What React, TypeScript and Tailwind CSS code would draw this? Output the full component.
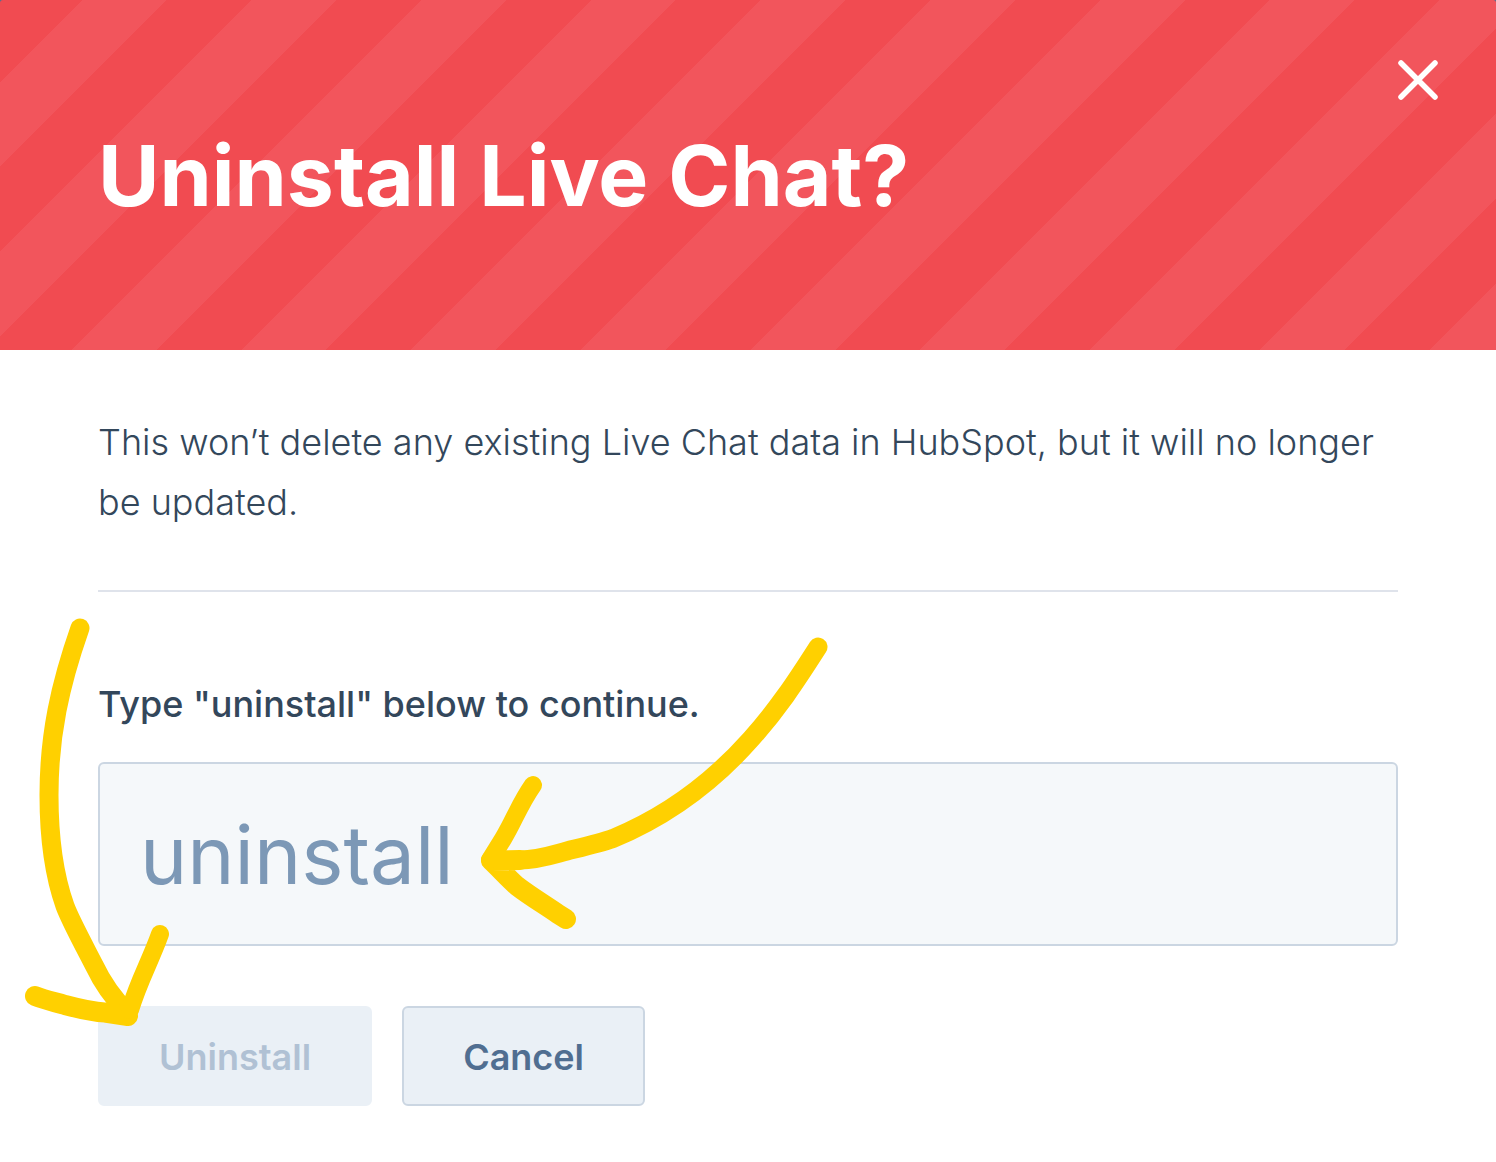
function CloseIcon() {
  return (
    <svg className="size-10" viewBox="0 0 40 40" fill="none" stroke="#fff" strokeWidth="5.500" strokeLinecap="round" aria-hidden="true">
      <path d="M3 3L37 37M37 3L3 37" />
    </svg>
  );
}

// Hand-drawn arrow that points at the uninstall button.
function ButtonArrow() {
  return (
    <svg
      className="pointer-events-none absolute bottom-20 -left-[78px] h-[412px] w-[150px]"
      viewBox="20 614 150 412"
      fill="none"
      stroke="#ffd000"
      strokeWidth="19"
      strokeLinecap="round"
      strokeLinejoin="round"
      aria-hidden="true"
    >
      <path d="M80 628C60 685 49 735 49 795C49 843 55 878 65 906C71 922 88 953 94 965C103 984 114 999 127 1012" />
      <path strokeWidth="20" d="M35 996C45 1000 55 1002 65 1005C80 1009 92 1012 105 1012.500L128 1016" />
      <path strokeWidth="18" d="M160 934C150 962 139 980 130 1010" />
    </svg>
  );
}

// Hand-drawn arrow that points at the text in the field.
function FieldArrow() {
  return (
    <svg
      className="pointer-events-none absolute bottom-2 left-[372px] h-[308px] w-[370px]"
      viewBox="470 630 370 308"
      fill="none"
      stroke="#ffd000"
      strokeWidth="19"
      strokeLinecap="round"
      strokeLinejoin="round"
      aria-hidden="true"
    >
      <path d="M818 647C795 683 777 710 751 739C712 783 665 817 613 838.500C600 843 585 846.500 567 851C552 855 538 860 520 860" />
      <path strokeWidth="20" d="M520 860L491 860.500C500 869 509 879 517 886C530 896 545 905 558 914L566 919" />
      <path strokeWidth="18" d="M533 785C519 805 514 821 503 839L490 860" />
    </svg>
  );
}

export default function App() {
  return (
    <div className="min-h-screen bg-white font-['Inter',sans-serif] text-[#33475b]" role="dialog" aria-labelledby="dialog-title">
      <div className="bg-[#516f90]">
        <header className="relative rounded-t-[3px] bg-[repeating-linear-gradient(135deg,#f14b51_0_58px,#f2555c_58px_118px,#f14b51_118px_120px)] px-[98px] pt-[126px] pb-[124px]">
          <h1 id="dialog-title" className="text-[84px] leading-[100px] font-bold text-white">
            Uninstall Live Chat?
          </h1>
          <button type="button" aria-label="Close" className="absolute top-[60px] right-[58px]">
            <CloseIcon />
          </button>
        </header>
      </div>

      <main className="px-[98px] pt-[62px] pb-14">
        <p className="text-4xl leading-[60px] font-light">
          This won’t delete any existing Live Chat data in HubSpot, but it will no longer be updated.
        </p>
        <hr className="mt-[58px] mb-[82px] border-t-2 border-[#dfe3eb]" />
        <form onSubmit={(e) => e.preventDefault()}>
          <label htmlFor="confirm" className="block text-4xl leading-[60px] font-medium">
            Type "uninstall" below to continue.
          </label>
          <div className="relative mt-7">
            <input
              id="confirm"
              type="text"
              placeholder="uninstall"
              className="block h-[184px] w-full rounded-md border-2 border-[#cbd6e2] bg-[#f5f8fa] px-10 text-[80px] font-normal text-[#33475b] outline-none placeholder:text-[#7c98b6]"
            />
            <FieldArrow />
          </div>
          <div className="relative mt-[60px] flex gap-[30px]">
            <button
              type="submit"
              disabled
              className="h-[100px] rounded-md border-2 border-[#eaf0f6] bg-[#eaf0f6] px-[59px] pt-[2px] text-4xl font-semibold text-[#b0c1d4]"
            >
              Uninstall
            </button>
            <button
              type="button"
              className="h-[100px] rounded-md border-2 border-[#cbd6e2] bg-[#eaf0f6] px-[59px] pt-[2px] text-4xl font-semibold text-[#506e91]"
            >
              Cancel
            </button>
            <ButtonArrow />
          </div>
        </form>
      </main>
    </div>
  );
}
